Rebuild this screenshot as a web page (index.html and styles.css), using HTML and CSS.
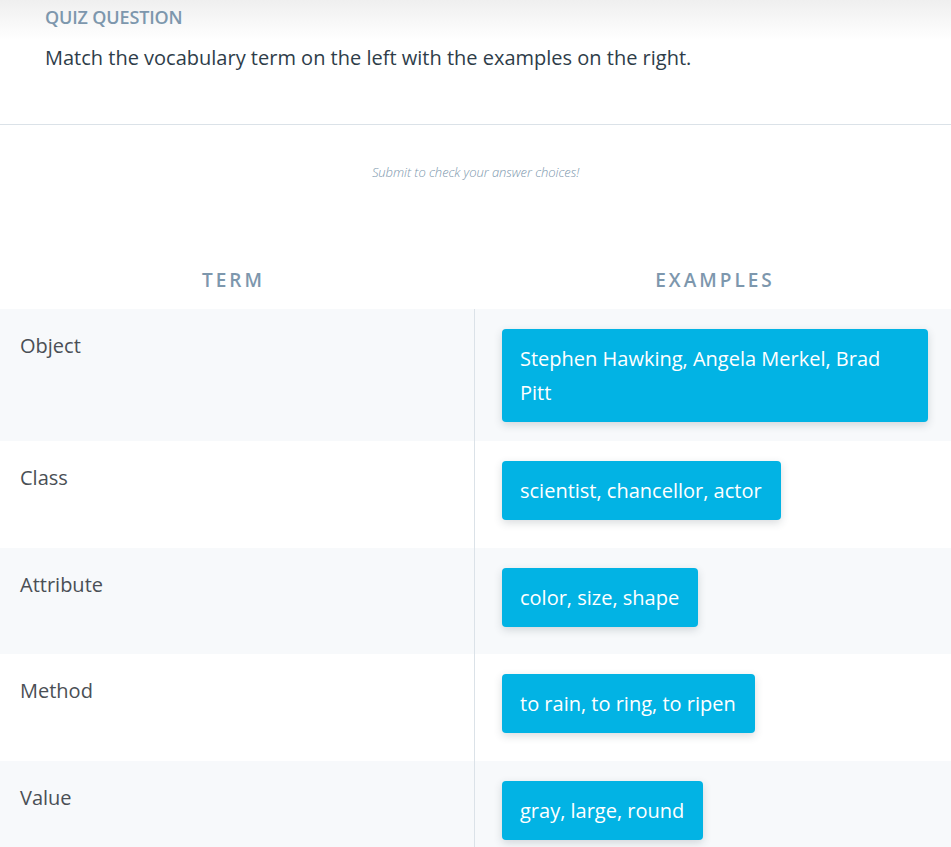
FILE: index.html
```html
<!DOCTYPE html>
<html>
<head>
<meta charset="utf-8">
<link rel="stylesheet" href="styles.css">
</head>
<body>
<div class="header">
  <div class="eyebrow">QUIZ QUESTION</div>
  <div class="question">Match the vocabulary term on the left with the examples on the right.</div>
</div>
<div class="hint">Submit to check your answer choices!</div>
<div class="heads">
  <div class="head">TERM</div>
  <div class="head">EXAMPLES</div>
</div>
<div class="table">
  <div class="row shade">
    <div class="term">Object</div>
    <div class="ex"><div class="card">Stephen Hawking, Angela Merkel, Brad Pitt</div></div>
  </div>
  <div class="row">
    <div class="term">Class</div>
    <div class="ex"><div class="card">scientist, chancellor, actor</div></div>
  </div>
  <div class="row shade">
    <div class="term">Attribute</div>
    <div class="ex"><div class="card">color, size, shape</div></div>
  </div>
  <div class="row">
    <div class="term">Method</div>
    <div class="ex"><div class="card">to rain, to ring, to ripen</div></div>
  </div>
  <div class="row shade">
    <div class="term">Value</div>
    <div class="ex"><div class="card">gray, large, round</div></div>
  </div>
</div>
</body>
</html>
```
FILE: styles.css
```css
* { box-sizing: border-box; }
html, body { margin: 0; padding: 0; background: #fff; }
body {
  font-family: "Open Sans", "Liberation Sans", sans-serif;
  color: #2e3d49;
  width: 951px;
  overflow: hidden;
}
.header {
  height: 125px;
  padding: 4px 45px 0;
  background: linear-gradient(#efefef 0px, #ffffff 40px);
  border-bottom: 1px solid #dbe2e8;
}
.eyebrow {
  font-size: 18px;
  font-weight: 600;
  letter-spacing: -0.15px;
  color: #7d97ad;
  line-height: 26px;
}
.question {
  margin-top: 14px;
  font-size: 20px;
  line-height: 28px;
  color: #2e3d49;
}
.hint {
  text-align: center;
  font-size: 13px;
  font-style: italic;
  font-weight: 300;
  color: #7d97ad;
  padding-top: 37px;
  line-height: 20px;
  letter-spacing: -0.05px;
}
.heads {
  display: grid;
  grid-template-columns: 475px 1fr;
  margin-top: 85px;
  height: 42px;
}
.head {
  text-align: center;
  font-size: 19px;
  font-weight: 600;
  letter-spacing: 3px;
  color: #7d97ad;
  line-height: 26px;
}
.head:first-child { padding-right: 8px; }
.head:last-child { padding-left: 4px; }
.table { display: flex; flex-direction: column; }
.row {
  display: grid;
  grid-template-columns: 475px 1fr;
  min-height: 106.6px;
  background: #fff;
}
.row.shade { background: #f7f9fb; }
.term {
  border-right: 1px solid #dbe2e8;
  padding: 23px 20px 20px;
  font-size: 20px;
  line-height: 28px;
  color: #4a4f55;
}
.ex {
  padding: 20px 23px 19px 27px;
}
.card {
  display: inline-block;
  background: #02b3e4;
  color: #fff;
  font-size: 20px;
  line-height: 34px;
  padding: 13px 19px 12px 18px;
  border-radius: 4px;
  box-shadow: 0 3px 8px rgba(46, 61, 73, 0.18);
}
```
